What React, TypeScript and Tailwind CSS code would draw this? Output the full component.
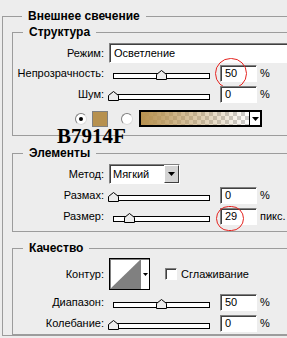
import { ReactNode } from "react";

const sunken =
  "border border-t-[#808080] border-l-[#808080] border-r-white border-b-white shadow-[inset_1px_1px_0_#404040]";

const Thumb = () => (
  <svg width="11" height="10" viewBox="0 0 11 10" className="block">
    <path d="M0.5 9.5V4.5L5.5 0.5L10.5 4.5V9.5Z" fill="#ececec" stroke="#000" />
  </svg>
);

const Caret = () => (
  <svg width="7" height="4" viewBox="0 0 7 4" className="block">
    <path d="M0 0H7L3.5 4Z" fill="#000" />
  </svg>
);

function Slider({ pos }: { pos: number }) {
  return (
    <div className="ml-[9px] flex h-full w-[97px] items-end pb-[3px]">
      <div className="relative h-[6px] w-full border border-black bg-white">
        <div className="absolute bottom-[-2px]" style={{ left: `calc(${pos}% - 6px)` }}>
          <Thumb />
        </div>
      </div>
    </div>
  );
}

function NumField({ value, unit, circle }: { value: string; unit: string; circle?: string }) {
  return (
    <>
      <div className={`relative ml-[10px] flex h-[17px] w-[37px] items-center bg-white pl-[4px] ${sunken}`}>
        {value}
        {circle && <span className={`absolute rounded-full border-[1.5px] border-[#e52420] ${circle}`} />}
      </div>
      <span className="ml-[3px]">{unit}</span>
    </>
  );
}

function Row({ label, className, children }: { label: string; className: string; children: ReactNode }) {
  return (
    <div className={`flex items-center ${className}`}>
      <div className="w-[91px] shrink-0 text-right">{label}</div>
      {children}
    </div>
  );
}

function Radio({ checked, className = "" }: { checked?: boolean; className?: string }) {
  return (
    <div
      className={`flex h-[12px] w-[12px] items-center justify-center rounded-full border border-t-[#808080] border-l-[#808080] border-r-[#dcdcdc] border-b-[#dcdcdc] bg-white ${className}`}
    >
      {checked && <div className="h-[4px] w-[4px] rounded-full bg-black" />}
    </div>
  );
}

function Group({ title, className, children }: { title: string; className: string; children: ReactNode }) {
  return (
    <fieldset className={`border border-[#9c9c9c] ${className}`}>
      <legend className="ml-[10px] px-[6px] text-[12px] font-bold leading-[13px]">{title}</legend>
      {children}
    </fieldset>
  );
}

export default function App() {
  return (
    <div className="relative h-[338px] w-[287px] overflow-hidden bg-[#ededed] pl-[2px] pt-[10px] font-['Liberation_Sans',Arial,sans-serif] text-[11px] leading-[13px] text-black">
      <Group title="Внешнее свечение" className="w-[330px] pl-[9px] pt-[3px]">
        <Group title="Структура" className="pb-[8px] pt-[4px]">
          <Row label="Режим:" className="h-[20px]">
            <div className={`ml-[5px] flex h-[20px] w-[200px] items-center bg-white pl-[4px] ${sunken}`}>Осветление</div>
          </Row>
          <Row label="Непрозрачность:" className="mt-[2px] h-[17px]">
            <Slider pos={50} />
            <NumField value="50" unit="%" circle="left-[-6px] top-[-8px] h-[31px] w-[32px]" />
          </Row>
          <Row label="Шум:" className="mt-[4px] h-[17px]">
            <Slider pos={0} />
            <NumField value="0" unit="%" />
          </Row>
          <div className="mt-[7px] flex h-[17px] items-center pl-[62px]">
            <Radio checked />
            <div className="ml-[5px] h-[16px] w-[16px] border border-[#808080] bg-[#b7914f]" />
            <Radio className="ml-[13px]" />
            <div className="ml-[6px] flex h-[17px] w-[123px] border-2 border-black">
              <div className="flex-1 [background-image:linear-gradient(to_right,#b7914f,rgba(183,145,79,0)),repeating-conic-gradient(#cdcdcd_0%_25%,#ffffff_0%_50%)] [background-size:100%_100%,8px_8px]" />
              <div className="flex w-[11px] items-center justify-center border-l border-black bg-white">
                <Caret />
              </div>
            </div>
          </div>
        </Group>

        <Group title="Элементы" className="mt-[11px] pb-[6px] pt-[4px]">
          <Row label="Метод:" className="h-[20px]">
            <div className={`ml-[5px] flex h-[20px] w-[71px] bg-white ${sunken}`}>
              <span className="flex-1 pl-[3px] leading-[18px]">Мягкий</span>
              <div className="flex w-[15px] items-center justify-center border border-t-white border-l-white border-r-[#404040] border-b-[#404040] bg-[#d4d4d4]">
                <Caret />
              </div>
            </div>
          </Row>
          <Row label="Размах:" className="mt-[3px] h-[17px]">
            <Slider pos={0} />
            <NumField value="0" unit="%" />
          </Row>
          <Row label="Размер:" className="mt-[4px] h-[17px]">
            <Slider pos={17} />
            <NumField value="29" unit="пикс." circle="left-[-5px] top-[-3px] h-[25px] w-[28px]" />
          </Row>
        </Group>

        <Group title="Качество" className="mt-[10px] pb-[2px] pt-[3px]">
          <Row label="Контур:" className="h-[32px]">
            <div className="ml-[5px] flex h-[32px] w-[41px] border border-black bg-white shadow-[inset_1px_1px_0_#808080]">
              <svg width="31" height="30" viewBox="0 0 31 30" className="block">
                <path d="M0 30L31 0V30Z" fill="#808080" />
              </svg>
              <div className="flex flex-1 items-center justify-center">
                <svg width="5" height="3" viewBox="0 0 5 3" className="block">
                  <path d="M0 0H5L2.5 3Z" fill="#000" />
                </svg>
              </div>
            </div>
            <div className={`ml-[15px] h-[12px] w-[12px] bg-white ${sunken}`} />
            <span className="ml-[4px]">Сглаживание</span>
          </Row>
          <Row label="Диапазон:" className="mt-[4px] h-[17px]">
            <Slider pos={50} />
            <NumField value="50" unit="%" />
          </Row>
          <Row label="Колебание:" className="mt-[4px] h-[17px]">
            <Slider pos={0} />
            <NumField value="0" unit="%" />
          </Row>
        </Group>
      </Group>

      <div className="absolute left-[57px] top-[128px] font-['Liberation_Serif','Times_New_Roman',serif] text-[21px] font-bold leading-[17px]">
        B7914F
      </div>
    </div>
  );
}
